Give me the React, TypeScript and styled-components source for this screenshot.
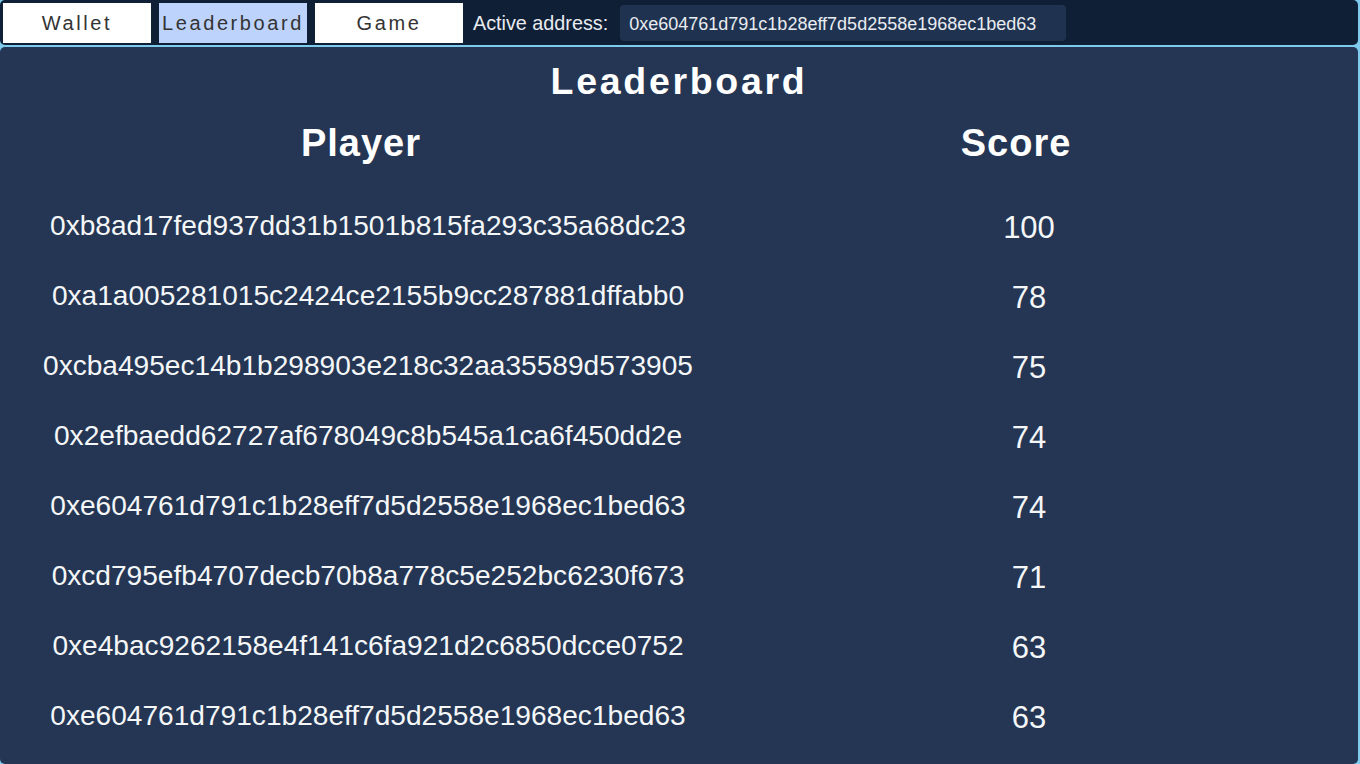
import React from "react";
import styled, { createGlobalStyle } from "styled-components";

const Global = createGlobalStyle`
  html, body { margin: 0; padding: 0; height: 100%; overflow: hidden; }
  body { font-family: "Liberation Sans", Arial, sans-serif; background: #7ecbee; }
  #root { height: 100%; }
`;

const Page = styled.div`
  height: 764px;
  display: flex;
  flex-direction: column;
  gap: 2px;
  padding-right: 2px;
  background: #7ecbee;
  box-sizing: border-box;
`;

const TopBar = styled.div`
  height: 45px;
  flex: none;
  display: flex;
  align-items: center;
  padding: 0 3px;
  gap: 8px;
  background: #0f1f36;
  border-radius: 5px;
`;

const TabButton = styled.button<{ $active?: boolean }>`
  width: 148px;
  height: 40px;
  border: none;
  border-radius: 0;
  padding: 2px 0 0;
  background: ${(p) => (p.$active ? "#bdd3fb" : "#ffffff")};
  color: #333333;
  font-family: "Liberation Sans", Arial, sans-serif;
  font-size: 20px;
  letter-spacing: 2.6px;
  cursor: pointer;
`;

const AddressLabel = styled.span`
  margin-left: 2px;
  padding-top: 1px;
  color: #e9ecf0;
  font-size: 19.8px;
  white-space: nowrap;
`;

const AddressBox = styled.div`
  margin-left: 4px;
  width: 446px;
  height: 36px;
  box-sizing: border-box;
  display: flex;
  align-items: center;
  padding: 3px 0 0 9px;
  background: #1f3350;
  border-radius: 4px;
  color: #e9ecf0;
  font-size: 18px;
`;

const Panel = styled.div`
  flex: 1;
  background: #243653;
  border-radius: 5px;
  display: flex;
  flex-direction: column;
  color: #ffffff;
`;

const Title = styled.h1`
  margin: 14px 0 0;
  text-align: center;
  font-size: 37.5px;
  line-height: 40px;
  font-weight: bold;
  letter-spacing: 2.7px;
`;

const HeaderRow = styled.div`
  display: grid;
  grid-template-columns: 722px 588px;
  margin-top: 20px;
  height: 44px;
  align-items: center;
`;

const HeaderCell = styled.div`
  text-align: center;
  font-size: 38px;
  font-weight: bold;
  letter-spacing: 1px;
`;

const Rows = styled.div`
  margin-top: 28px;
  display: flex;
  flex-direction: column;
`;

const Row = styled.div`
  display: grid;
  grid-template-columns: 736px 586px;
  height: 70px;
  align-items: center;
`;

const AddressCell = styled.div`
  text-align: center;
  font-size: 28.1px;
  color: #f4f6f8;
  transform: translateY(-2px);
`;

const ScoreCell = styled.div`
  text-align: center;
  font-size: 31px;
  color: #f4f6f8;
`;

const entries: [string, number][] = [
  ["0xb8ad17fed937dd31b1501b815fa293c35a68dc23", 100],
  ["0xa1a005281015c2424ce2155b9cc287881dffabb0", 78],
  ["0xcba495ec14b1b298903e218c32aa35589d573905", 75],
  ["0x2efbaedd62727af678049c8b545a1ca6f450dd2e", 74],
  ["0xe604761d791c1b28eff7d5d2558e1968ec1bed63", 74],
  ["0xcd795efb4707decb70b8a778c5e252bc6230f673", 71],
  ["0xe4bac9262158e4f141c6fa921d2c6850dcce0752", 63],
  ["0xe604761d791c1b28eff7d5d2558e1968ec1bed63", 63],
];

export default function App() {
  return (
    <>
      <Global />
      <Page>
        <TopBar>
          <TabButton>Wallet</TabButton>
          <TabButton $active>Leaderboard</TabButton>
          <TabButton>Game</TabButton>
          <AddressLabel>Active address:</AddressLabel>
          <AddressBox>0xe604761d791c1b28eff7d5d2558e1968ec1bed63</AddressBox>
        </TopBar>
        <Panel>
          <Title>Leaderboard</Title>
          <HeaderRow>
            <HeaderCell>Player</HeaderCell>
            <HeaderCell>Score</HeaderCell>
          </HeaderRow>
          <Rows>
            {entries.map(([addr, score], i) => (
              <Row key={i}>
                <AddressCell>{addr}</AddressCell>
                <ScoreCell>{score}</ScoreCell>
              </Row>
            ))}
          </Rows>
        </Panel>
      </Page>
    </>
  );
}
